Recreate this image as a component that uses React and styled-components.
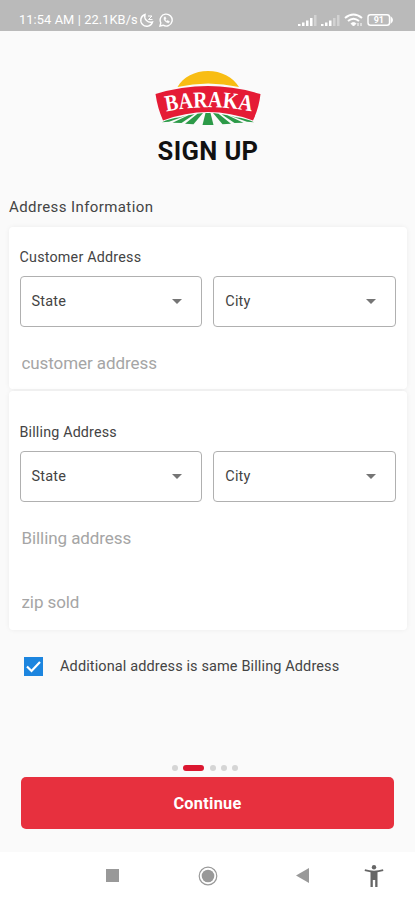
import styled, { createGlobalStyle } from "styled-components"
import { useState } from "react"

const Select = ({ label }) => (
    <SelectBox type="button">
        <span>{label}</span>
        <Caret viewBox="0 0 10 5">
            <path d="M0 0h10L5 5z" fill="#757575" />
        </Caret>
    </SelectBox>
)

const Logo = () => (
    <LogoSvg viewBox="0 0 108 56" role="img" aria-label="Baraka">
        <defs>
            <path id="banner-curve" d="M8 42.500Q54 32 102 42.500" />
        </defs>
        <path d="M23.500 17C29 7 41 1 54 1s25 6 31 16Q54 10 23.500 17z" fill="#f8bd13" />
        <path d="M1.500 24Q54 8 106.500 24Q105 38 99 50.500Q54 33.500 9 50.500Q3.500 38 1.500 24z" fill="#e51b35" />
        <g fill="#2c9a48">
            <path d="M51.500 43h5l3 12H48.500z" />
            <path d="M43.500 43.700l5.500-.7-9.500 11.200-8.500-.4z" />
            <path d="M64.500 43.700L59 43l9.500 11.200 8.500-.4z" />
            <path d="M34.500 45.300l6-1.100L27.500 53l-9-.3z" />
            <path d="M73.500 45.300l-6-1.100L80.500 53l9-.3z" />
            <path d="M26 47.300l6-1.500L15 51.800l-7 .4q7-3.500 18-4.900z" />
            <path d="M82 47.300l-6-1.500 17 6 7 .4q-7-3.500-18-4.900z" />
        </g>
        <LogoText>
            <textPath href="#banner-curve" startOffset="50%" textAnchor="middle" textLength="86" lengthAdjust="spacingAndGlyphs">
                BARAKA
            </textPath>
        </LogoText>
    </LogoSvg>
)

const StatusIcons = () => (
    <svg width="98" height="16" viewBox="0 0 98 16">
        <g fill="#fff">
            <path d="M0 12h2.500v2H0zM4 10.500h2.500V14H4zM8 8.500h2.500V14H8zM12 6h2.500v8H12z" />
            <path d="M16 3h2.500v11H16z" opacity=".35" />
            <path d="M23 12h2.500v2H23zM27 10.500h2.500V14H27zM31 8.500h2.500V14H31z" />
            <path d="M35 6h2.500v8H35zM39 3h2.500v11H39z" opacity=".35" />
        </g>
        <g fill="none" stroke="#fff" strokeWidth="2">
            <path d="M47 6q8.500-7 17 0M50 9q5.500-4.500 11 0" />
            <path d="M53 11.500q2.500-2 5 0L55.500 14z" fill="#fff" strokeWidth="1" />
            <path d="M60 11v3M63 11v3" strokeWidth="1" />
        </g>
        <rect x="70" y="2.700" width="21.500" height="10.600" rx="2.500" fill="none" stroke="#fff" strokeWidth="1.400" />
        <path d="M92.500 4q5 4 0 8z" fill="#fff" />
        <text x="80.800" y="11.200" textAnchor="middle" fontSize="9" fontWeight="700" fill="#fff">91</text>
    </svg>
)

const App = () => {
    const [sameAddress, setSameAddress] = useState(true)

    return (
        <Screen>
            <GlobalStyle />
            <StatusBar>
                <Clock>11:54 AM | 22.1KB/s</Clock>
                <svg width="34" height="16" viewBox="0 0 34 16" fill="none" stroke="#fff" strokeWidth="1.400">
                    <path d="M6 2.500A6 6 0 1 0 13.500 10A6 6 0 0 1 6 2.500z" />
                    <path d="M9 4h4L9.500 7.500h4" strokeWidth="1" />
                    <path d="M21 14l.8-3.200A6 6 0 1 1 24 13.200z" />
                    <path d="M25 5.500q-.5 4 4.500 5.500l1-1.500-2-1-1 .8-1.300-1.500.8-1-.8-2z" fill="#fff" strokeWidth=".5" />
                </svg>
                <Spacer />
                <StatusIcons />
            </StatusBar>

            <Content>
                <Header>
                    <Logo />
                    <Title>SIGN UP</Title>
                </Header>

                <SectionTitle>Address Information</SectionTitle>

                <Card $height={162}>
                    <CardTitle $top={20} $spacing="0.22px">Customer Address</CardTitle>
                    <SelectRow>
                        <Select label="State" />
                        <Select label="City" />
                    </SelectRow>
                    <Input aria-label="customer address" placeholder="customer address" />
                </Card>
                <Card $height={239}>
                    <CardTitle $top={31} $spacing="0.17px">Billing Address</CardTitle>
                    <SelectRow>
                        <Select label="State" />
                        <Select label="City" />
                    </SelectRow>
                    <Input aria-label="Billing address" placeholder="Billing address" />
                    <Input aria-label="zip sold" placeholder="zip sold" />
                </Card>

                <CheckRow>
                    <CheckBox
                        type="button"
                        role="checkbox"
                        aria-checked={sameAddress}
                        $checked={sameAddress}
                        onClick={() => setSameAddress(!sameAddress)}
                    >
                        {sameAddress && (
                            <svg width="19" height="19" viewBox="0 0 19 19">
                                <path d="M3 9.500l4.500 4.500L16 5" fill="none" stroke="#fff" strokeWidth="2.200" />
                            </svg>
                        )}
                    </CheckBox>
                    <CheckLabel>Additional address is same Billing Address</CheckLabel>
                </CheckRow>

                <Footer>
                    <Dots>
                        {[0, 1, 2, 3, 4].map((step) => (
                            <Dot key={step} $active={step === 1} />
                        ))}
                    </Dots>
                    <ContinueButton type="button">Continue</ContinueButton>
                </Footer>
            </Content>

            <NavBar>
                <svg width="13" height="13" viewBox="0 0 13 13">
                    <path d="M0 0h13v13H0z" fill="#999" />
                </svg>
                <svg width="20" height="20" viewBox="0 0 20 20">
                    <circle cx="10" cy="10" r="8.800" fill="none" stroke="#999" strokeWidth="1.200" />
                    <circle cx="10" cy="10" r="6.300" fill="#999" />
                </svg>
                <svg width="13" height="15" viewBox="0 0 13 15">
                    <path d="M13 0v15L0 7.500z" fill="#999" />
                </svg>
                <svg width="20" height="22" viewBox="0 0 20 22" fill="#666">
                    <circle cx="10" cy="2.300" r="2.200" />
                    <path d="M1 4.300Q10 7 19 4.300l.4 1.800-5.900 1.200V22h-2.300v-7H8.800v7H6.500V7.300L.6 6.100z" />
                </svg>
            </NavBar>
        </Screen>
    )
}

export default App

const GlobalStyle = createGlobalStyle`
    * {
        box-sizing: border-box;
    }

    body {
        margin: 0;
        background-color: #fafafa;
        font-family: Roboto, "Liberation Sans", sans-serif;
    }

    button,
    input {
        font-family: inherit;
    }
`

const Screen = styled.div`
    display: flex;
    flex-direction: column;
    height: 100vh;
    overflow: hidden;
    color: #444;
`

const StatusBar = styled.div`
    display: flex;
    align-items: center;
    height: 31px;
    padding: 8px 19px 0 19px;
    background-color: #bababa;
    color: white;
`

const Clock = styled.span`
    width: 120px;
    font-size: 12.8px;
    letter-spacing: 0.1px;
    white-space: nowrap;
`

const Spacer = styled.div`
    flex: 1;
`

const Content = styled.main`
    display: flex;
    flex: 1;
    flex-direction: column;
    padding: 0 8px 0 9px;
`

const Header = styled.header`
    display: flex;
    flex-direction: column;
    align-items: center;
    padding-top: 39px;
`

const LogoSvg = styled.svg`
    width: 108px;
    height: 56px;
`

const LogoText = styled.text`
    fill: white;
    font-family: "Liberation Serif", serif;
    font-size: 23px;
    font-weight: 700;
`

const Title = styled.h1`
    margin: 10px 0 0;
    color: #111;
    font-size: 25.5px;
    line-height: 30px;
    letter-spacing: 0.4px;
`

const SectionTitle = styled.h2`
    margin: 31px 0 10px;
    font-size: 15px;
    font-weight: 400;
    line-height: 20px;
    letter-spacing: 0.4px;
`

const Card = styled.section`
    height: ${({ $height }) => $height}px;
    margin-bottom: 2px;
    padding: 0 11px 0 10.5px;
    border-radius: 4px;
    background-color: white;
    box-shadow: 0 0 5px rgba(0, 0, 0, 0.06);
`

const CardTitle = styled.h3`
    margin: 0;
    padding: ${({ $top }) => $top}px 0 9px;
    font-size: 14.3px;
    font-weight: 400;
    line-height: 20px;
    letter-spacing: ${({ $spacing }) => $spacing};
`

const SelectRow = styled.div`
    display: flex;
    gap: 11px;
    margin-bottom: 4px;
`

const SelectBox = styled.button`
    display: flex;
    flex: 1;
    align-items: center;
    justify-content: space-between;
    height: 51px;
    padding: 0 19px 1px 11px;
    border: 1px solid #b0b0b0;
    border-radius: 4px;
    background-color: white;
    color: #444;
    font-size: 14.5px;
    letter-spacing: 0.2px;
`

const Caret = styled.svg`
    width: 10px;
    height: 5px;
    margin-top: 1px;
`

const Input = styled.input`
    display: block;
    width: 100%;
    height: 64px;
    padding: 0 2px;
    border: 0;
    outline: 0;
    background-color: transparent;
    font-size: 17px;
    letter-spacing: -0.08px;

    &::placeholder {
        color: #a5a5a5;
    }
`

const CheckRow = styled.label`
    display: flex;
    align-items: center;
    gap: 17px;
    margin-top: 23px;
    padding-left: 15px;
    font-size: 14.5px;
    line-height: 20px;
    letter-spacing: 0.12px;
    white-space: nowrap;
`

const CheckLabel = styled.span`
    padding-top: 2px;
`

const CheckBox = styled.button`
    width: 19px;
    height: 19px;
    padding: 0;
    border: 0;
    background-color: ${({ $checked }) => ($checked ? "#1c85df" : "#bbb")};
    line-height: 0;
`

const Footer = styled.footer`
    margin-top: auto;
    padding: 0 13px 23px 12px;
`

const Dots = styled.div`
    display: flex;
    justify-content: center;
    gap: 5.3px;
    margin-bottom: 6px;
    padding-right: 5px;
`

const Dot = styled.span`
    width: ${({ $active }) => ($active ? "21px" : "6px")};
    height: 6px;
    border-radius: 3px;
    background-color: ${({ $active }) => ($active ? "#db1730" : "#d5d5d5")};
`

const ContinueButton = styled.button`
    display: block;
    width: 100%;
    height: 52px;
    border: 0;
    border-radius: 5px;
    background-color: #e7303e;
    color: white;
    font-size: 16.3px;
    font-weight: 700;
    letter-spacing: 0.3px;
`

const NavBar = styled.nav`
    display: grid;
    grid-template-columns: 95px 95px 94px 50px;
    justify-content: start;
    align-items: center;
    justify-items: center;
    height: 48px;
    padding: 0 0 1px 65px;
    background-color: white;
`
